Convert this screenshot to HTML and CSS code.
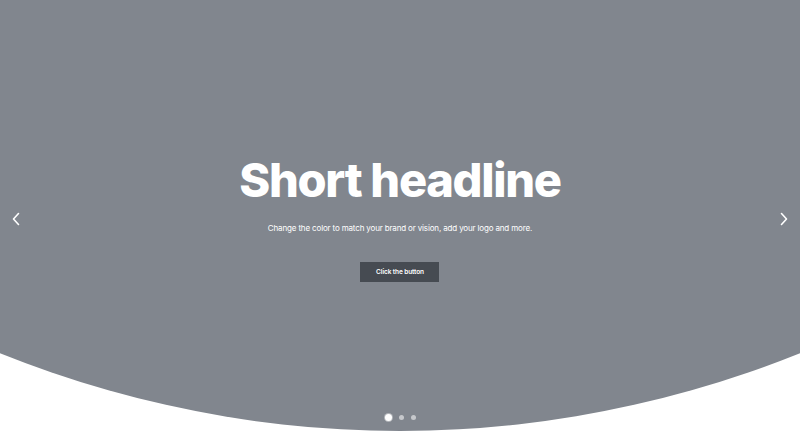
FILE: index.html
```html
<!DOCTYPE html>
<html lang="en">
<head>
<meta charset="utf-8">
<title>Hero</title>
<link rel="stylesheet" href="styles.css">
</head>
<body>
<section class="hero">
  <div class="hero-content">
    <h1 class="headline">Short headline</h1>
    <p class="lead">Change the color to match your brand or vision, add your logo and more.</p>
    <a class="btn" href="#">Click the button</a>
  </div>
  <button class="arrow arrow-prev" aria-label="Previous">
    <svg viewBox="0 0 10 14" width="10" height="14"><path d="M7.5 1.5 L2.5 7 L7.5 12.5" fill="none" stroke="#fff" stroke-width="1.6" stroke-linecap="round" stroke-linejoin="round"/></svg>
  </button>
  <button class="arrow arrow-next" aria-label="Next">
    <svg viewBox="0 0 10 14" width="10" height="14"><path d="M2.5 1.5 L7.5 7 L2.5 12.5" fill="none" stroke="#fff" stroke-width="1.6" stroke-linecap="round" stroke-linejoin="round"/></svg>
  </button>
  <div class="dots">
    <span class="dot active"></span>
    <span class="dot"></span>
    <span class="dot"></span>
  </div>
</section>
</body>
</html>
```

FILE: styles.css
```css
* { box-sizing: border-box; }
html, body { margin: 0; padding: 0; background: #ffffff; }
body { font-family: Inter, "Noto Sans", "Liberation Sans", sans-serif; height: 434px; overflow: hidden; }

.hero {
  position: relative;
  height: 434px;
  background: #81868e;
  clip-path: ellipse(1200px 1360px at 50% -929px);
  display: flex;
  align-items: center;
  justify-content: center;
}

.hero-content {
  display: flex;
  flex-direction: column;
  align-items: center;
  margin-top: 3px;
}

.headline {
  margin: 0;
  color: #ffffff;
  font-weight: 800;
  font-size: 47px;
  letter-spacing: -1.3px;
  line-height: 47px;
}

.lead {
  margin: 19px 0 0;
  color: #ffffff;
  font-size: 8px;
  letter-spacing: -0.15px;
  line-height: 12px;
}

.btn {
  margin-top: 28px;
  display: flex;
  align-items: center;
  justify-content: center;
  width: 79px;
  height: 20px;
  background: #464b52;
  color: #ffffff;
  font-size: 6.5px;
  font-weight: 600;
  letter-spacing: -0.1px;
  text-decoration: none;
}

.arrow {
  position: absolute;
  top: 212px;
  width: 14px;
  height: 14px;
  padding: 0;
  border: 0;
  background: transparent;
  display: flex;
  align-items: center;
  justify-content: center;
}
.arrow-prev { left: 9px; }
.arrow-next { right: 9px; }

.dots {
  position: absolute;
  left: 0;
  right: 0;
  top: 414px;
  display: flex;
  justify-content: center;
  align-items: center;
  gap: 7px;
}
.dot {
  width: 5px;
  height: 5px;
  border-radius: 50%;
  background: rgba(255,255,255,0.55);
}
.dot.active {
  width: 7px;
  height: 7px;
  background: #ffffff;
  box-shadow: 0 0 0 1px rgba(255,255,255,0.4);
}
```
